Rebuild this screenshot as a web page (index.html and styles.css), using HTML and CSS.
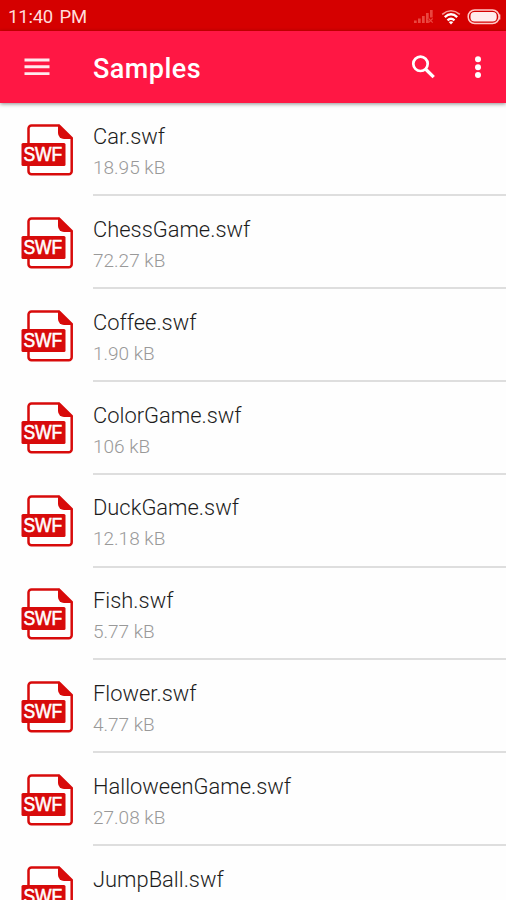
FILE: index.html
```html
<!DOCTYPE html>
<html lang="en">
<head>
    <meta charset="UTF-8">
    <meta name="viewport" content="width=device-width, initial-scale=1.0">
    <title>Samples</title>
    <link rel="stylesheet" href="styles.css">
</head>
<body>
    <svg class="defs" width="0" height="0">
        <symbol id="swf" viewBox="0 0 52 52">
            <path d="M38 1.500H10.500a3 3 0 0 0-3 3v42.800a3 3 0 0 0 3 3h37.200a3 3 0 0 0 3-3V14z" fill="#fff" stroke="#d80b0b" stroke-width="2.500"/>
            <path d="M37 .5v8.500a6 6 0 0 0 6 6h9z" fill="#d80b0b"/>
            <rect x="0.500" y="19" width="44" height="23" rx="1.5" fill="#d80b0b"/>
            <text x="2.400" y="37.200" textLength="38.800" lengthAdjust="spacingAndGlyphs" class="icon-text">SWF</text>
        </symbol>
    </svg>

    <div class="status-bar">
        <span class="time">11:40 PM</span>
        <svg class="signal" width="21" height="16" viewBox="0 0 21 16" fill="#e94740">
            <rect x="0" y="11.500" width="2.700" height="2.500"/>
            <rect x="4" y="9.500" width="2.700" height="4.500"/>
            <rect x="8" y="7" width="2.700" height="7"/>
            <path d="M12 4h2.700v5l-1.200 1.200 1.200 1.200V14H12z"/>
            <path d="M16 1h2.700v7.500H16z"/>
            <path d="M14.500 9.500l4.200 4.200m0-4.200l-4.200 4.200" stroke="#e94740" stroke-width="1.200"/>
        </svg>
        <svg class="wifi" width="20" height="16" viewBox="0 0 20 16" fill="none" stroke="#fff" stroke-width="2.400">
            <path d="M1.200 5.300Q10-1.700 18.800 5.300" stroke="#f79a95" stroke-width="1.600"/>
            <path d="M3.800 8.200Q10 2.500 16.200 8.200"/>
            <path d="M6.500 11.300Q10 8 13.500 11.300"/>
            <path d="M10 15.500l-2.300-2.500q2.300-1.500 4.600 0z" fill="#fff" stroke="none"/>
        </svg>
        <svg class="battery" width="34" height="16" viewBox="0 0 34 16">
            <rect x="1.200" y="1" width="30.800" height="13.500" rx="6.500" fill="none" stroke="#ffc9c6" stroke-width="1.500"/>
            <rect x="3.500" y="3" width="26.200" height="9.500" rx="4" fill="#ffecec"/>
            <path d="M32.600 5.500v5" stroke="#ffc9c6" stroke-width="1.500"/>
        </svg>
    </div>

    <div class="toolbar">
        <svg class="menu" width="26" height="20" viewBox="0 0 26 20" stroke="#ffe9ed" stroke-width="2.900">
            <path d="M.5 3h25M.5 9.800h25M.5 16.600h25"/>
        </svg>
        <h1>Samples</h1>
        <svg class="search" width="26" height="26" viewBox="0 0 26 26" fill="none" stroke="#fff">
            <circle cx="9.500" cy="9.800" r="7.200" stroke-width="2.700"/>
            <path d="M14.500 15l8.200 8.200" stroke-width="3.300"/>
        </svg>
        <svg class="more" width="8" height="24" viewBox="0 0 8 24" fill="#fff">
            <circle cx="4" cy="4.300" r="3"/>
            <circle cx="4" cy="12.200" r="3"/>
            <circle cx="4" cy="20" r="3"/>
        </svg>
    </div>

    <div class="file-list">
        <div class="file">
            <svg class="file-icon"><use href="#swf"/></svg>
            <div class="file-info">
                <div class="name">Car.swf</div>
                <div class="size">18.95 kB</div>
            </div>
        </div>
        <div class="file">
            <svg class="file-icon"><use href="#swf"/></svg>
            <div class="file-info">
                <div class="name">ChessGame.swf</div>
                <div class="size">72.27 kB</div>
            </div>
        </div>
        <div class="file">
            <svg class="file-icon"><use href="#swf"/></svg>
            <div class="file-info">
                <div class="name">Coffee.swf</div>
                <div class="size">1.90 kB</div>
            </div>
        </div>
        <div class="file">
            <svg class="file-icon"><use href="#swf"/></svg>
            <div class="file-info">
                <div class="name">ColorGame.swf</div>
                <div class="size">106 kB</div>
            </div>
        </div>
        <div class="file">
            <svg class="file-icon"><use href="#swf"/></svg>
            <div class="file-info">
                <div class="name">DuckGame.swf</div>
                <div class="size">12.18 kB</div>
            </div>
        </div>
        <div class="file">
            <svg class="file-icon"><use href="#swf"/></svg>
            <div class="file-info">
                <div class="name">Fish.swf</div>
                <div class="size">5.77 kB</div>
            </div>
        </div>
        <div class="file">
            <svg class="file-icon"><use href="#swf"/></svg>
            <div class="file-info">
                <div class="name">Flower.swf</div>
                <div class="size">4.77 kB</div>
            </div>
        </div>
        <div class="file">
            <svg class="file-icon"><use href="#swf"/></svg>
            <div class="file-info">
                <div class="name">HalloweenGame.swf</div>
                <div class="size">27.08 kB</div>
            </div>
        </div>
        <div class="file">
            <svg class="file-icon"><use href="#swf"/></svg>
            <div class="file-info">
                <div class="name">JumpBall.swf</div>
            </div>
        </div>
    </div>
</body>
</html>
```

FILE: styles.css
```css
* {
    box-sizing: border-box;
}
body {
    margin: 0;
    height: 900px;
    display: flex;
    flex-direction: column;
    overflow: hidden;
    background: #fefefe;
    font-family: Roboto, sans-serif;
}
.defs {
    display: none;
}
.status-bar {
    flex: none;
    height: 31px;
    padding: 2px 5px 0 8px;
    display: flex;
    align-items: center;
    background: #d50000;
    color: #ffdcda;
}
.time {
    margin-right: auto;
    font-size: 18.5px;
    letter-spacing: -0.2px;
    word-spacing: 2px;
}
.signal {
    margin-right: 6px;
}
.wifi {
    margin-right: 6px;
}
.toolbar {
    flex: none;
    height: 72px;
    padding: 0 24px;
    display: flex;
    align-items: center;
    background: #ff1744;
    box-shadow: 0 1px 4px rgba(0,0,0,0.45);
    z-index: 1;
}
.toolbar h1 {
    margin: 4px auto 0 43px;
    font-size: 27px;
    font-weight: 500;
    letter-spacing: 0.45px;
    line-height: 32px;
    color: #fff;
}
.search {
    margin-right: 37px;
}
.file-list {
    flex: 1;
    min-height: 0;
    padding-top: 0.7px;
    overflow: hidden;
}
.file {
    height: 92.8px;
    padding-left: 21px;
    display: flex;
}
.file-icon {
    flex: none;
    width: 52px;
    height: 52px;
    margin: 20.3px 20px 0 0;
}
.icon-text {
    font-family: "Liberation Sans", sans-serif;
    font-size: 19.5px;
    fill: #fff;
    stroke: #fff;
    stroke-width: 0.6px;
}
.file-info {
    flex: 1;
    padding-top: 18.5px;
    border-bottom: 2px solid #dedede;
}
.name {
    font-size: 21.9px;
    font-weight: 300;
    line-height: 30px;
    color: #1c1c1c;
}
.size {
    font-size: 19px;
    font-weight: 300;
    line-height: 32px;
    color: #999;
}
```
